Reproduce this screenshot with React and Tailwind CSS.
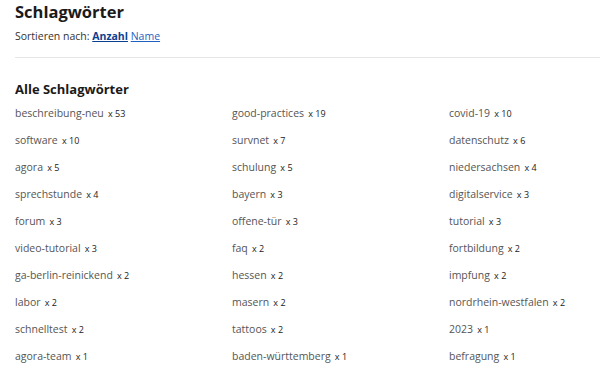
import React from "react";

const tags = [
  ["beschreibung-neu", 53],
  ["good-practices", 19],
  ["covid-19", 10],
  ["software", 10],
  ["survnet", 7],
  ["datenschutz", 6],
  ["agora", 5],
  ["schulung", 5],
  ["niedersachsen", 4],
  ["sprechstunde", 4],
  ["bayern", 3],
  ["digitalservice", 3],
  ["forum", 3],
  ["offene-tür", 3],
  ["tutorial", 3],
  ["video-tutorial", 3],
  ["faq", 2],
  ["fortbildung", 2],
  ["ga-berlin-reinickend", 2],
  ["hessen", 2],
  ["impfung", 2],
  ["labor", 2],
  ["masern", 2],
  ["nordrhein-westfalen", 2],
  ["schnelltest", 2],
  ["tattoos", 2],
  ["2023", 1],
  ["agora-team", 1],
  ["baden-württemberg", 1],
  ["befragung", 1],
];

const App = () => {
  return (
    <div className="min-h-[370px] bg-white font-['Open_Sans',sans-serif] overflow-hidden">
      <div className="pl-[15px]">
        <h1 className="text-[16.5px] font-bold text-[#1a1a1a] leading-[24px]">Schlagwörter</h1>
        <div className="text-[10.5px] text-[#333] mt-[4px] leading-[16px]">
          Sortieren nach:{" "}
          <a className="font-bold text-[#0b3f8f] underline">Anzahl</a>{" "}
          <a className="text-[#1f5fbf] underline">Name</a>
        </div>
        <hr className="border-t border-[#e6e6e6] mt-[13px] mb-0" />
        <h2 className="text-[13px] font-bold text-[#1a1a1a] leading-[20px] mt-[21px]">Alle Schlagwörter</h2>
        {/* tag grid */}
        <div className="grid grid-cols-[217px_217px_217px]">
          {tags.map(([name, count]) => (
            <div key={name} className="h-[27px] leading-[24px] whitespace-nowrap">
              <span className="text-[10.5px] text-[#555]">{name}</span>{" "}
              <span className="text-[9px] text-[#222]">x {count}</span>
            </div>
          ))}
        </div>
      </div>
    </div>
  );
};

export default App;
